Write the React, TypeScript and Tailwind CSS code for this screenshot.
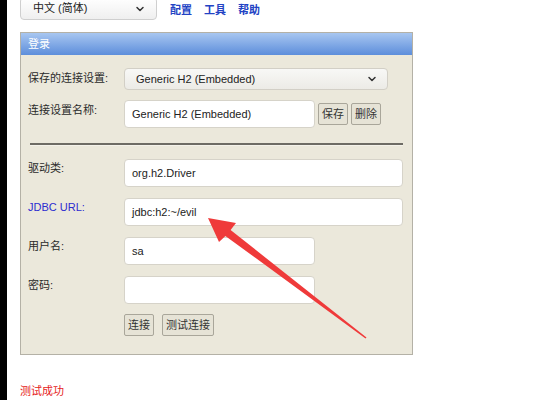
import React from 'react';
import { ChevronDown } from 'lucide-react';

const font = "font-['Liberation_Sans','Noto_Sans_CJK_SC',sans-serif]";

function Field({ label, children, blue = false, pt = 'pt-[2px]' }: { label: string; children: React.ReactNode; blue?: boolean; pt?: string }) {
  return (
    <div className="flex items-start">
      <div className={`w-[96px] shrink-0 text-[11px] leading-[14px] ${pt} ${blue ? 'text-[#2b2bd0]' : 'text-[#2a2a2a]'}`}>{label}</div>
      {children}
    </div>
  );
}

function TextInput({ value = '', wide = true }: { value?: string; wide?: boolean }) {
  return (
    <div className={`${wide ? 'w-[279px]' : 'w-[191px]'} h-[28px] bg-white border border-[#d6d3c9] rounded-[4px] flex items-center px-[7px] text-[11px] text-[#222]`}>
      {value}
    </div>
  );
}

function SmallButton({ label }: { label: string }) {
  return (
    <button className="h-[22px] px-[3px] bg-[#e6e3d6] border border-[#a9a69a] rounded-[2px] text-[11px] leading-none text-[#333]">
      {label}
    </button>
  );
}

export default function App() {
  return (
    <div className={`relative w-[541px] h-[400px] overflow-hidden bg-white flex ${font}`}>
      {/* left dark strip */}
      <div className="w-[7px] shrink-0 bg-black" />

      <div className="flex-1 pl-[13px]">
        {/* top bar */}
        <div className="flex items-center h-[20px]">
          <div className="w-[137px] h-[23px] mt-[-3px] rounded-[4px] border border-[#cfcfcf] bg-gradient-to-b from-[#ffffff] to-[#efefef] flex items-center justify-between pl-[12px] pr-[10px] text-[11px] text-[#222]">
            <span>中文 (简体)</span>
            <ChevronDown size={12} strokeWidth={3} className="text-[#333]" />
          </div>
          <div className="flex gap-[12px] ml-[13px] text-[11px] text-[#2343c4] font-bold">
            <span>配置</span>
            <span>工具</span>
            <span>帮助</span>
          </div>
        </div>

        {/* login panel */}
        <div className="mt-[12px] w-[393px] h-[323px] border border-[#b4b1a6] bg-[#ebe8db] flex flex-col">
          <div className="h-[22px] bg-gradient-to-b from-[#a8c6f0] to-[#5d8edb] text-white text-[11px] flex items-center pl-[7px]">
            登录
          </div>

          <div className="flex flex-col pl-[7px] pr-[9px] pt-[13px]">
            <Field label="保存的连接设置:" pt="pt-[3px]">
              <div className="w-[264px] h-[22px] rounded-[4px] border border-[#d2cfc6] bg-gradient-to-b from-[#f8f8f6] to-[#ecebe6] flex items-center justify-between pl-[11px] pr-[9px] text-[11px] text-[#222]">
                <span>Generic H2 (Embedded)</span>
                <ChevronDown size={12} strokeWidth={3} className="text-[#333]" />
              </div>
            </Field>

            <div className="mt-[10px]">
              <Field label="连接设置名称:" pt="pt-[3px]">
                <div className="flex items-center gap-[3px]">
                  <TextInput value="Generic H2 (Embedded)" wide={false} />
                  <SmallButton label="保存" />
                  <SmallButton label="删除" />
                </div>
              </Field>
            </div>

            <div className="mt-[15px] ml-[2px] h-[3px] border-t-2 border-[#6d6b64] bg-[#f4f2ea]" />

            <div className="mt-[13px] flex flex-col gap-[11px]">
              <Field label="驱动类:">
                <TextInput value="org.h2.Driver" />
              </Field>
              <Field label="JDBC URL:" blue>
                <TextInput value="jdbc:h2:~/evil" />
              </Field>
              <Field label="用户名:">
                <TextInput value="sa" wide={false} />
              </Field>
              <Field label="密码:">
                <TextInput wide={false} />
              </Field>
            </div>

            <div className="mt-[10px] flex gap-[8px] ml-[96px]">
              <SmallButton label="连接" />
              <SmallButton label="测试连接" />
            </div>
          </div>
        </div>

        <div className="mt-[28px] text-[11px] text-[#e62222]">测试成功</div>
      </div>

      {/* annotation arrow */}
      <svg className="absolute left-0 top-0 pointer-events-none" width="541" height="400" viewBox="0 0 541 400">
        <polygon
          points="208,218 236,223 230.6,230 366.5,337.6 365.5,338.4 225.4,235.9 219,242"
          fill="#ef3a3a"
        />
      </svg>
    </div>
  );
}
